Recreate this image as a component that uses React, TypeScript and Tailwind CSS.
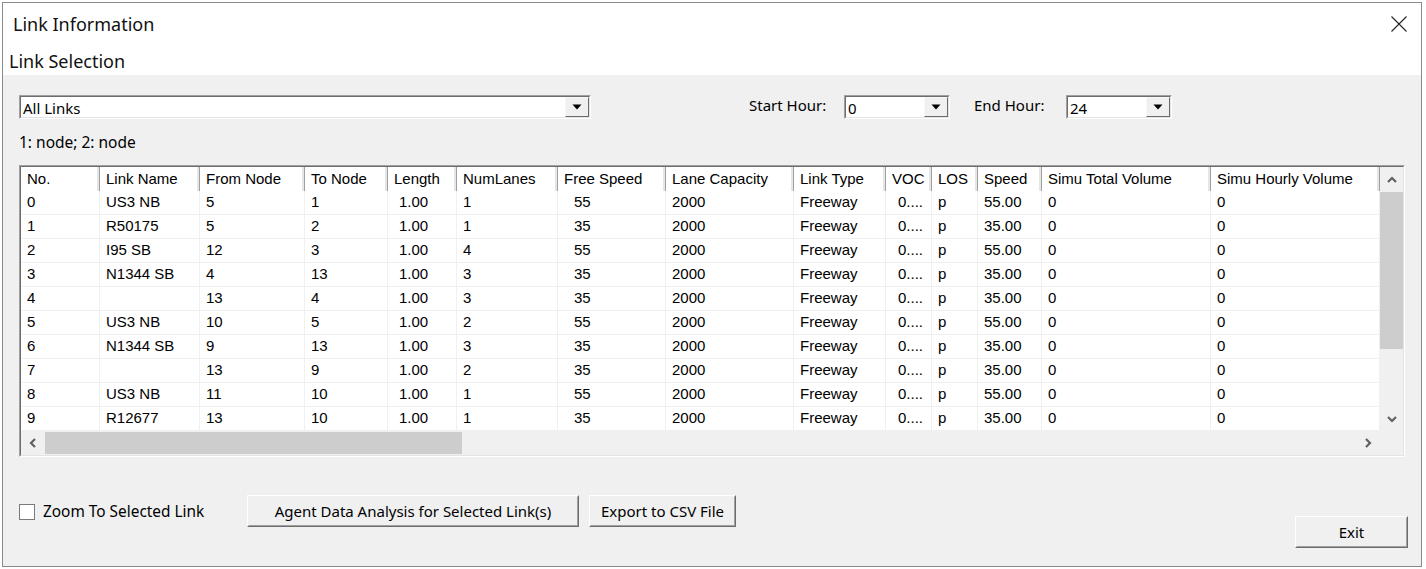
import React from "react";

const cols = [
  { name: "No.", w: 79, pad: 6 },
  { name: "Link Name", w: 100, pad: 6 },
  { name: "From Node", w: 105, pad: 6 },
  { name: "To Node", w: 83, pad: 6 },
  { name: "Length", w: 69, pad: 11 },
  { name: "NumLanes", w: 101, pad: 6 },
  { name: "Free Speed", w: 108, pad: 16 },
  { name: "Lane Capacity", w: 128, pad: 6 },
  { name: "Link Type", w: 92, pad: 6 },
  { name: "VOC", w: 46, pad: 12 },
  { name: "LOS", w: 46, pad: 6 },
  { name: "Speed", w: 64, pad: 6 },
  { name: "Simu Total Volume", w: 169, pad: 6 },
  { name: "Simu Hourly Volume", w: 169, pad: 6 },
];

const raw: [string, string, string, string, string, string][] = [
  ["0", "US3 NB", "5", "1", "1", "55"],
  ["1", "R50175", "5", "2", "1", "35"],
  ["2", "I95 SB", "12", "3", "4", "55"],
  ["3", "N1344 SB", "4", "13", "3", "35"],
  ["4", "", "13", "4", "3", "35"],
  ["5", "US3 NB", "10", "5", "2", "55"],
  ["6", "N1344 SB", "9", "13", "3", "35"],
  ["7", "", "13", "9", "2", "35"],
  ["8", "US3 NB", "11", "10", "1", "55"],
  ["9", "R12677", "13", "10", "1", "35"],
];

const rows = raw.map((r) => [
  r[0],
  r[1],
  r[2],
  r[3],
  "1.00",
  r[4],
  r[5],
  "2000",
  "Freeway",
  "0....",
  "p",
  r[5] + ".00",
  "0",
  "0",
]);

function Tri() {
  return (
    <svg width="10" height="6" viewBox="0 0 10 6">
      <path d="M0.5 0.5 L9.5 0.5 L5 5.5 Z" fill="#000" />
    </svg>
  );
}

function Combo({ value, w }: { value: string; w: string }) {
  return (
    <div className={`${w} h-[24px] border border-t-[#a0a0a0] border-l-[#a0a0a0] border-r-white border-b-white`}>
      <div className="h-full border border-t-[#6d6d6d] border-l-[#6d6d6d] border-r-[#e3e3e3] border-b-[#e3e3e3] bg-white flex items-stretch">
        <div className="flex-1 pl-[2px] text-[15px] leading-[22px] text-black">{value}</div>
        <div className="w-[24px] bg-[#f0f0f0] border border-t-[#f8f8f8] border-l-[#f8f8f8] border-r-[#6d6d6d] border-b-[#6d6d6d] flex items-center justify-center">
          <Tri />
        </div>
      </div>
    </div>
  );
}

function Btn({ label, w, cls = "" }: { label: string; w: string; cls?: string }) {
  return (
    <div className={`${w} h-[32px] border border-t-white border-l-white border-r-[#6d6d6d] border-b-[#6d6d6d] bg-[#f0f0f0] ${cls}`}>
      <div className="h-full border border-t-[#f0f0f0] border-l-[#f0f0f0] border-r-[#a0a0a0] border-b-[#a0a0a0] flex items-center justify-center text-[15px] text-black">
        {label}
      </div>
    </div>
  );
}

function Chevron({ dir }: { dir: "up" | "down" | "left" | "right" }) {
  const d = {
    up: "M1 6 L5 2 L9 6",
    down: "M1 2 L5 6 L9 2",
    left: "M6 1 L2 5 L6 9",
    right: "M2 1 L6 5 L2 9",
  }[dir];
  const vertical = dir === "up" || dir === "down";
  return (
    <svg width={vertical ? 10 : 8} height={vertical ? 8 : 10} viewBox={vertical ? "0 0 10 8" : "0 0 8 10"}>
      <path d={d} fill="none" stroke="#606060" strokeWidth="2.2" />
    </svg>
  );
}

export default function App() {
  return (
    <div
      className="w-[1426px] h-[569px] bg-white overflow-hidden pt-[2px] pl-[2px]"
      style={{ fontFamily: '"Noto Sans", "Open Sans", sans-serif' }}
    >
      <div className="w-[1420px] h-[565px] border border-[#8a8a8a] bg-white flex flex-col">
        {/* title bar */}
        <div className="h-[40px] flex items-center justify-between pl-[10px] pr-[14px] pt-[2px]">
          <span className="text-[18px] text-[#111] leading-none">Link Information</span>
          <svg width="16" height="16" viewBox="0 0 16 16">
            <path d="M0.5 0.5 L15.5 15.5 M15.5 0.5 L0.5 15.5" stroke="#222" strokeWidth="1.1" />
          </svg>
        </div>
        <div className="h-[32px] flex items-center pl-[6px] pt-[3px]">
          <span className="text-[18px] text-[#111] leading-none">Link Selection</span>
        </div>
        {/* body */}
        <div className="flex-1 bg-[#f0f0f0] pl-[16px] pt-[20px] flex flex-col">
          <div className="flex items-start">
            <Combo value="All Links" w="w-[572px]" />
            <div className="ml-[158px] w-[95px] text-[15px] leading-[20px] text-black">Start Hour:</div>
            <Combo value="0" w="w-[106px]" />
            <div className="ml-[24px] w-[92px] text-[15px] leading-[20px] text-black">End Hour:</div>
            <Combo value="24" w="w-[106px]" />
          </div>
          <div className="mt-[13px] h-[20px] text-[15.5px] leading-[20px] text-black">1: node; 2: node</div>
          {/* table */}
          <div className="mt-[13px] w-[1386px] h-[292px] border border-t-[#a0a0a0] border-l-[#a0a0a0] border-r-white border-b-white">
            <div
              className="h-full border border-t-[#6d6d6d] border-l-[#6d6d6d] border-r-[#e3e3e3] border-b-[#e3e3e3] flex flex-col bg-white"
              style={{ fontFamily: '"Liberation Sans", Arial, sans-serif' }}
            >
              <div className="flex flex-1 min-h-0">
                <div className="flex-1 flex flex-col overflow-hidden">
                  {/* header */}
                  <div className="flex h-[24px] shrink-0 bg-white">
                    {cols.map((c) => (
                      <div
                        key={c.name}
                        className="shrink-0 h-full border-r border-r-[#a0a0a0] text-[15px] leading-[24px] text-black whitespace-nowrap overflow-hidden pl-[6px] shadow-[inset_-2px_0_0_#e6e6e6]"
                        style={{ width: c.w }}
                      >
                        {c.name}
                      </div>
                    ))}
                  </div>
                  {rows.map((r, i) => (
                    <div key={i} className="flex h-[24px] shrink-0 border-b border-b-[#f0f0f0]">
                      {r.map((v, j) => (
                        <div
                          key={j}
                          className="shrink-0 h-full border-r border-r-[#f0f0f0] text-[15px] leading-[22px] text-black whitespace-nowrap overflow-hidden"
                          style={{ width: cols[j].w, paddingLeft: cols[j].pad }}
                        >
                          {v}
                        </div>
                      ))}
                    </div>
                  ))}
                </div>
                {/* vertical scrollbar */}
                <div className="w-[23px] bg-[#f0f0f0] flex flex-col items-stretch">
                  <div className="h-[25px] flex items-center justify-center">
                    <Chevron dir="up" />
                  </div>
                  <div className="h-[157px] bg-[#cdcdcd]" />
                  <div className="flex-1" />
                  <div className="h-[25px] flex items-center justify-center">
                    <Chevron dir="down" />
                  </div>
                </div>
              </div>
              {/* horizontal scrollbar */}
              <div className="h-[24px] flex bg-[#f0f0f0] shrink-0">
                <div className="w-[24px] flex items-center justify-center">
                  <Chevron dir="left" />
                </div>
                <div className="w-[417px] h-[22px] mt-[1px] bg-[#cdcdcd]" />
                <div className="flex-1" />
                <div className="w-[24px] flex items-center justify-center">
                  <Chevron dir="right" />
                </div>
                <div className="w-[23px]" />
              </div>
            </div>
          </div>
          {/* bottom controls */}
          <div className="mt-[38px] flex items-start">
            <div className="w-[228px] h-[32px] flex items-center pt-[2px]">
              <div className="w-[16px] h-[16px] bg-white border border-[#7a7a7a]" />
              <span className="ml-[8px] text-[15.4px] leading-[20px] text-black">Zoom To Selected Link</span>
            </div>
            <Btn label="Agent Data Analysis for Selected Link(s)" w="w-[332px]" />
            <Btn label="Export to CSV File" w="w-[147px]" cls="ml-[10px]" />
            <Btn label="Exit" w="w-[113px]" cls="ml-auto mr-[13px] mt-[21px]" />
          </div>
        </div>
      </div>
    </div>
  );
}
